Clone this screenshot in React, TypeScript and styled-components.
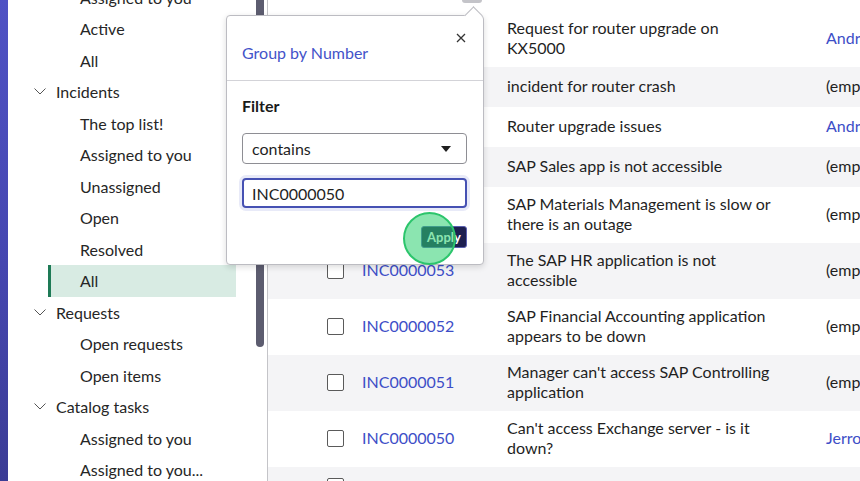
import styled, { createGlobalStyle } from "styled-components";

const GlobalStyle = createGlobalStyle`
  html, body {
    margin: 0;
    padding: 0;
    background: #ffffff;
  }
  body {
    font-family: Lato, "Open Sans", "Liberation Sans", sans-serif;
    color: #1f1f1f;
  }
`;

type NavEntry = { label: string; section?: boolean; active?: boolean };

const navItems: NavEntry[] = [
  { label: "Assigned to you" },
  { label: "Active" },
  { label: "All" },
  { label: "Incidents", section: true },
  { label: "The top list!" },
  { label: "Assigned to you" },
  { label: "Unassigned" },
  { label: "Open" },
  { label: "Resolved" },
  { label: "All", active: true },
  { label: "Requests", section: true },
  { label: "Open requests" },
  { label: "Open items" },
  { label: "Catalog tasks", section: true },
  { label: "Assigned to you" },
  { label: "Assigned to you..." },
];

type Row = { num: string; desc: string; caller: string; link?: boolean };

const rows: Row[] = [
  { num: "INC0000058", desc: "Request for router upgrade on KX5000", caller: "Andrew Och", link: true },
  { num: "INC0000057", desc: "incident for router crash", caller: "(empty)" },
  { num: "INC0000056", desc: "Router upgrade issues", caller: "Andrew Och", link: true },
  { num: "INC0000055", desc: "SAP Sales app is not accessible", caller: "(empty)" },
  { num: "INC0000054", desc: "SAP Materials Management is slow or there is an outage", caller: "(empty)" },
  { num: "INC0000053", desc: "The SAP HR application is not accessible", caller: "(empty)" },
  { num: "INC0000052", desc: "SAP Financial Accounting application appears to be down", caller: "(empty)" },
  { num: "INC0000051", desc: "Manager can't access SAP Controlling application", caller: "(empty)" },
  { num: "INC0000050", desc: "Can't access Exchange server - is it down?", caller: "Jerrod Bennett", link: true },
  { num: "INC0000049", desc: "Email server is not available", caller: "Bow Ruggeri", link: true },
];

const App = () => {
  return (
    <>
      <GlobalStyle />
      <Page>
        <Rail />
        <Sidebar>
          <NavList>
            {navItems.map((item, i) =>
              item.section ? (
                <SectionItem key={i}>
                  <Chevron width="12" height="7" viewBox="0 0 12 7">
                    <polyline points="0.5,0.5 6,6 11.5,0.5" fill="none" stroke="#555" strokeWidth="1" />
                  </Chevron>
                  {item.label}
                </SectionItem>
              ) : (
                <NavItem key={i} active={item.active}>
                  {item.label}
                </NavItem>
              )
            )}
          </NavList>
          <ScrollTrack>
            <ScrollThumb />
          </ScrollTrack>
        </Sidebar>
        <Main>
          <HeaderRow>
            <HeaderButton />
          </HeaderRow>
          {rows.map((r, i) => (
            <TableRow key={r.num} striped={i % 2 === 1}>
              <CheckCell>
                <Checkbox />
              </CheckCell>
              <NumCell>{r.num}</NumCell>
              <DescCell>{r.desc}</DescCell>
              <CallerCell link={r.link}>{r.caller}</CallerCell>
            </TableRow>
          ))}
        </Main>

        <Popover>
          <Arrow />
          <PopHeader>
            <PopTitle>Group by Number</PopTitle>
            <CloseButton>
              <svg width="10" height="10" viewBox="0 0 10 10">
                <path d="M1 1 L9 9 M9 1 L1 9" stroke="#333" strokeWidth="1.3" />
              </svg>
            </CloseButton>
          </PopHeader>
          <PopBody>
            <FilterLabel>Filter</FilterLabel>
            <Select>
              <span>contains</span>
              <svg width="10" height="6" viewBox="0 0 10 6">
                <polygon points="0,0 10,0 5,6" fill="#1f1f1f" />
              </svg>
            </Select>
            <TextInput>INC0000050</TextInput>
            <Actions>
              <ApplyButton>Apply</ApplyButton>
            </Actions>
          </PopBody>
        </Popover>
        <ClickMark />
      </Page>
    </>
  );
};

export default App;

const Page = styled.div`
  position: relative;
  display: flex;
  width: 860px;
  height: 481px;
  overflow: hidden;
`;

const Rail = styled.div`
  width: 8px;
  flex-shrink: 0;
  background: linear-gradient(180deg, #4f52c4 0%, #4546b0 55%, #3b3c95 100%);
`;

const Sidebar = styled.div`
  width: 260px;
  flex-shrink: 0;
  display: flex;
  border-right: 1px solid #c4c4c8;
  box-sizing: border-box;
  background: #ffffff;
`;

const NavList = styled.div`
  flex: 1;
  margin-top: -18.5px;
  padding-right: 20px;
`;

const NavItem = styled.div<{ active?: boolean }>`
  height: 31.5px;
  display: flex;
  align-items: center;
  margin-left: 40px;
  padding-left: ${(p) => (p.active ? "29px" : "32px")};
  border-left: ${(p) => (p.active ? "3px solid #1e7a56" : "none")};
  background: ${(p) => (p.active ? "#d8ebe3" : "transparent")};
  font-size: 16px;
  color: #262626;
  white-space: nowrap;
`;

const SectionItem = styled.div`
  height: 31.5px;
  display: flex;
  align-items: center;
  gap: 10px;
  padding-left: 26px;
  font-size: 16px;
  color: #262626;
`;

const Chevron = styled.svg`
  flex-shrink: 0;
`;

const ScrollTrack = styled.div`
  width: 8px;
  margin-right: 3px;
`;

const ScrollThumb = styled.div`
  height: 357px;
  margin-top: -10px;
  border-radius: 4px;
  background: #5c5c6f;
`;

const Main = styled.div`
  flex: 1;
  display: flex;
  flex-direction: column;
`;

const HeaderRow = styled.div`
  height: 11px;
  flex-shrink: 0;
  display: flex;
  align-items: flex-start;
  padding-left: 194px;
`;

const HeaderButton = styled.div`
  width: 20px;
  height: 3px;
  border-radius: 0 0 4px 4px;
  background: #c4c4c9;
`;

const TableRow = styled.div<{ striped?: boolean }>`
  display: grid;
  grid-template-columns: 82px 145px 319px 1fr;
  align-items: center;
  min-height: 40px;
  padding: 7px 0 9px;
  box-sizing: border-box;
  flex-shrink: 0;
  background: ${(p) => (p.striped ? "#f4f4f6" : "#ffffff")};
  font-size: 16px;
  line-height: 20px;
`;

const CheckCell = styled.div`
  padding-left: 59px;
  display: flex;
`;

const Checkbox = styled.div`
  width: 15px;
  height: 15px;
  margin-top: 1px;
  border: 1px solid #5a5a5a;
  border-radius: 2px;
  background: #ffffff;
`;

const NumCell = styled.div`
  padding-left: 12px;
  color: #3d4ec7;
  white-space: nowrap;
`;

const DescCell = styled.div`
  padding: 0 39px 0 12px;
  color: #1f1f1f;
`;

const CallerCell = styled.div<{ link?: boolean }>`
  padding-left: 12px;
  white-space: nowrap;
  color: ${(p) => (p.link ? "#3d4ec7" : "#1f1f1f")};
`;

const Popover = styled.div`
  position: absolute;
  left: 226px;
  top: 15px;
  width: 258px;
  height: 250px;
  box-sizing: border-box;
  border: 1px solid #bcbcc2;
  border-radius: 4px;
  background: #ffffff;
  box-shadow: 0 2px 6px rgba(0, 0, 0, 0.14);
`;

const Arrow = styled.div`
  position: absolute;
  top: -7px;
  left: 240px;
  width: 12px;
  height: 12px;
  background: #ffffff;
  border-top: 1px solid #bcbcc2;
  border-left: 1px solid #bcbcc2;
  transform: rotate(45deg);
`;

const PopHeader = styled.div`
  height: 64px;
  display: flex;
  justify-content: space-between;
  align-items: flex-start;
  padding: 0 17px 0 15px;
  border-bottom: 1px solid #d3d3d8;
`;

const PopTitle = styled.div`
  margin-top: 27px;
  font-size: 16px;
  line-height: 20px;
  color: #4353c9;
`;

const CloseButton = styled.div`
  margin-top: 17px;
  width: 10px;
  height: 10px;
  display: flex;
`;

const PopBody = styled.div`
  padding: 15px 16px 0 15px;
  display: flex;
  flex-direction: column;
`;

const FilterLabel = styled.div`
  font-size: 16px;
  font-weight: 700;
  line-height: 20px;
  color: #1a1a1a;
`;

const Select = styled.div`
  margin-top: 17px;
  height: 31px;
  box-sizing: border-box;
  border: 1px solid #8e8e94;
  border-radius: 4px;
  display: flex;
  align-items: center;
  justify-content: space-between;
  padding: 0 15px 0 9px;
  font-size: 16px;
  color: #1f1f1f;
`;

const TextInput = styled.div`
  margin-top: 14px;
  height: 30px;
  box-sizing: border-box;
  border: 2px solid #4651b3;
  border-radius: 4px;
  box-shadow: 0 0 0 3px #e8eaf8;
  display: flex;
  align-items: center;
  padding-left: 8px;
  font-size: 16px;
  color: #1f1f1f;
`;

const Actions = styled.div`
  margin-top: 18px;
  display: flex;
  justify-content: flex-end;
`;

const ApplyButton = styled.div`
  width: 46px;
  height: 22px;
  box-sizing: border-box;
  border: 1px solid #5a5fb0;
  border-radius: 3px;
  background: #1d1f50;
  color: #ffffff;
  font-size: 13px;
  font-weight: 700;
  display: flex;
  align-items: center;
  justify-content: center;
`;

const ClickMark = styled.div`
  position: absolute;
  left: 403px;
  top: 212px;
  width: 53px;
  height: 53px;
  box-sizing: border-box;
  border-radius: 50%;
  border: 2px solid #2cc56c;
  background: rgba(44, 208, 112, 0.55);
  pointer-events: none;
`;
